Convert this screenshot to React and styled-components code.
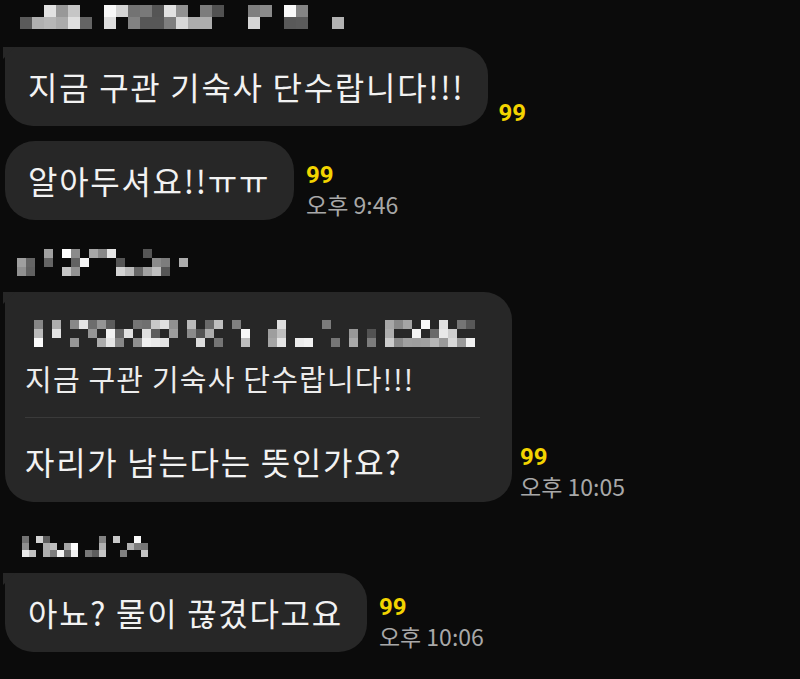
import React from 'react';
import styled, { createGlobalStyle } from 'styled-components';

const GlobalStyle = createGlobalStyle`
  html, body {
    margin: 0;
    padding: 0;
    background: #0b0b0b;
  }
  body {
    font-family: "Noto Sans CJK KR", "Noto Sans", sans-serif;
  }
`;

const Screen = styled.div`
  width: 800px;
  height: 679px;
  overflow: hidden;
  background: #0b0b0b;
  box-sizing: border-box;
  padding: 5px 0 0 5px;
  display: flex;
  flex-direction: column;
`;

const Group = styled.div`
  display: flex;
  flex-direction: column;
  gap: 15px;
  margin-bottom: ${(p) => p.$after || 0}px;
`;

const NameRow = styled.div`
  display: flex;
  padding-left: ${(p) => p.$indent || 3}px;
  margin-bottom: ${(p) => p.$gap || 0}px;
  height: ${(p) => p.$h || 24}px;
`;

const Row = styled.div`
  display: flex;
  align-items: flex-end;
  gap: ${(p) => p.$gap || 10}px;
`;

const Bubble = styled.div`
  position: relative;
  background: #272727;
  color: #f2f2f2;
  font-size: 32px;
  line-height: 40px;
  letter-spacing: 1.7px;
  border-radius: ${(p) => (p.$first ? '4px 28px 28px 28px' : '30px')};
  padding: ${(p) => p.$pad || '19px 24px 20px 23px'};
  white-space: nowrap;

  ${(p) =>
    p.$first &&
    `
    &::before {
      content: '';
      position: absolute;
      left: -2px;
      top: 0;
      width: 0;
      height: 0;
      border-top: 12px solid #272727;
      border-right: 12px solid transparent;
    }
  `}
`;

const Quote = styled.div`
  display: flex;
  flex-direction: column;
  padding-bottom: 20px;
  border-bottom: 1px solid #3a3a3a;
  margin-bottom: 23px;
`;

const QuoteText = styled.div`
  font-size: 29px;
  line-height: 38px;
  letter-spacing: 1.2px;
  color: #ececec;
  margin-top: 12px;
`;

const Meta = styled.div`
  display: flex;
  flex-direction: column;
  margin-bottom: ${(p) => p.$mb || 0}px;
`;

const Unread = styled.span`
  font-family: Roboto, "Liberation Sans", sans-serif;
  font-weight: 700;
  font-size: 24px;
  line-height: 26px;
  color: #f3d400;
`;

const Time = styled.span`
  font-family: "Noto Sans CJK KR", Roboto, sans-serif;
  font-size: 23px;
  line-height: 32px;
  color: #a8a8a8;
  white-space: nowrap;
`;

function rng(seed) {
  let s = seed;
  return () => {
    s = (s * 16807) % 2147483647;
    return (s - 1) / 2147483646;
  };
}

function Mosaic({ width, height, cell = 9, seed = 7, density = 0.55 }) {
  const rand = rng(seed);
  const cols = Math.floor(width / cell);
  const rows = Math.floor(height / cell);
  const rects = [];
  let gapRun = 0;
  for (let c = 0; c < cols; c++) {
    const blank = rand() < 0.12 && gapRun === 0;
    gapRun = blank ? 1 : 0;
    for (let r = 0; r < rows; r++) {
      if (blank) continue;
      const on = rand() < density + (r === rows - 1 ? 0.25 : 0);
      if (!on) continue;
      const v = Math.round(80 + rand() * 175);
      rects.push(
        <rect
          key={`${c}-${r}`}
          x={c * cell}
          y={r * cell}
          width={cell}
          height={cell}
          fill={`rgb(${v},${v},${v})`}
        />
      );
    }
  }
  return (
    <svg width={width} height={height} viewBox={`0 0 ${width} ${height}`}>
      {rects}
    </svg>
  );
}

export default function App() {
  return (
    <>
      <GlobalStyle />
      <Screen>
        <NameRow $indent={3} $gap={18} $h={24}>
          <Mosaic width={340} height={24} cell={12} seed={17} density={0.6} />
        </NameRow>
        <Group $after={29}>
          <Row>
            <Bubble $first>지금 구관 기숙사 단수랍니다!!!</Bubble>
            <Meta $mb={0}>
              <Unread>99</Unread>
            </Meta>
          </Row>
          <Row $gap={12}>
            <Bubble>알아두셔요!!ㅠㅠ</Bubble>
            <Meta $mb={0}>
              <Unread>99</Unread>
              <Time>오후 9:46</Time>
            </Meta>
          </Row>
        </Group>

        <NameRow $indent={3} $gap={16} $h={27}>
          <Mosaic width={188} height={27} cell={9} seed={29} density={0.4} />
        </NameRow>
        <Group $after={34}>
          <Row $gap={8}>
            <Bubble $first $pad="28px 32px 21px 20px">
              <Quote>
                <Mosaic width={455} height={27} cell={9} seed={53} density={0.5} />
                <QuoteText>지금 구관 기숙사 단수랍니다!!!</QuoteText>
              </Quote>
              <div>자리가 남는다는 뜻인가요?</div>
            </Bubble>
            <Meta $mb={0}>
              <Unread>99</Unread>
              <Time>오후 10:05</Time>
            </Meta>
          </Row>
        </Group>

        <NameRow $indent={0} $gap={16} $h={21}>
          <Mosaic width={144} height={21} cell={7} seed={71} density={0.45} />
        </NameRow>
        <Group>
          <Row $gap={12}>
            <Bubble $first>아뇨? 물이 끊겼다고요</Bubble>
            <Meta $mb={0}>
              <Unread>99</Unread>
              <Time>오후 10:06</Time>
            </Meta>
          </Row>
        </Group>
      </Screen>
    </>
  );
}
